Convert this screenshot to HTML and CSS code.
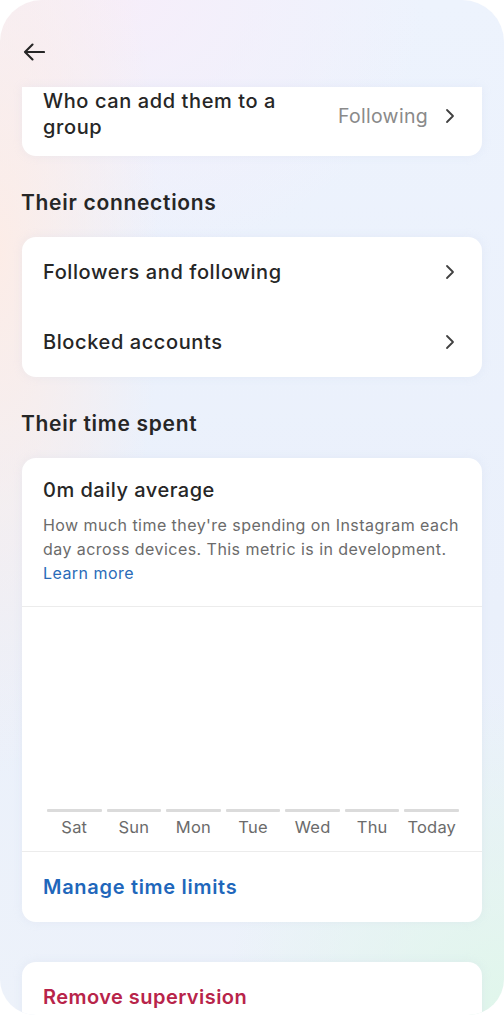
FILE: index.html
```html
<!DOCTYPE html>
<html>
<head>
<meta charset="utf-8">
<link rel="stylesheet" href="styles.css">
</head>
<body>
<div class="screen">
  <div class="header">
    <svg class="back" width="22" height="18" viewBox="0 0 22 18"><path d="M21 9H2.5M9.5 1.5L2 9l7.5 7.5" fill="none" stroke="#262626" stroke-width="2.1" stroke-linecap="round" stroke-linejoin="round"/></svg>
  </div>
  <div class="content">
    <div class="card card-cut">
      <div class="row row-tall">
        <span class="label">Who can add them to a<br>group</span>
        <span class="value">Following</span>
        <svg class="chev" width="10" height="16" viewBox="0 0 10 16"><path d="M2 2l6 6-6 6" fill="none" stroke="#404040" stroke-width="1.8" stroke-linecap="round" stroke-linejoin="round"/></svg>
      </div>
    </div>

    <h2 class="section-title">Their connections</h2>
    <div class="card">
      <div class="row">
        <span class="label">Followers and following</span>
        <svg class="chev" width="10" height="16" viewBox="0 0 10 16"><path d="M2 2l6 6-6 6" fill="none" stroke="#404040" stroke-width="1.8" stroke-linecap="round" stroke-linejoin="round"/></svg>
      </div>
      <div class="row">
        <span class="label">Blocked accounts</span>
        <svg class="chev" width="10" height="16" viewBox="0 0 10 16"><path d="M2 2l6 6-6 6" fill="none" stroke="#404040" stroke-width="1.8" stroke-linecap="round" stroke-linejoin="round"/></svg>
      </div>
    </div>

    <h2 class="section-title">Their time spent</h2>
    <div class="card">
      <div class="time-top">
        <div class="avg">0m daily average</div>
        <p class="desc">How much time they're spending on Instagram each day across devices. This metric is in development. <br><span class="link">Learn more</span></p>
      </div>
      <div class="chart">
        <div class="day"><div class="bar"></div><span>Sat</span></div>
        <div class="day"><div class="bar"></div><span>Sun</span></div>
        <div class="day"><div class="bar"></div><span>Mon</span></div>
        <div class="day"><div class="bar"></div><span>Tue</span></div>
        <div class="day"><div class="bar"></div><span>Wed</span></div>
        <div class="day"><div class="bar"></div><span>Thu</span></div>
        <div class="day"><div class="bar"></div><span>Today</span></div>
      </div>
      <div class="action action-blue">Manage time limits</div>
    </div>

    <div class="card card-last">
      <div class="action action-red">Remove supervision</div>
    </div>
  </div>
</div>
</body>
</html>
```

FILE: styles.css
```css
* { box-sizing: border-box; }
html, body {
  margin: 0;
  padding: 0;
  background: #ffffff;
}
body {
  font-family: Inter, "Noto Sans", sans-serif;
  color: #262626;
}
.screen {
  width: 504px;
  height: 1015px;
  border-radius: 42px 42px 36px 36px;
  overflow: hidden;
  background:
    radial-gradient(ellipse 160px 520px at 0% 25%, rgba(253, 236, 230, 0.95), rgba(253, 236, 230, 0) 100%),
    radial-gradient(ellipse 280px 320px at 100% 100%, rgba(224, 246, 235, 1), rgba(224, 246, 235, 0) 100%),
    radial-gradient(ellipse 300px 260px at 25% 0%, rgba(246, 238, 250, 1), rgba(246, 238, 250, 0) 100%),
    linear-gradient(180deg, #edf3fd 0%, #eaf0fb 60%, #edf2fa 100%);
}
.header {
  height: 87px;
  display: flex;
  align-items: center;
  padding: 0 0 0 23px;
}
.back {
  display: block;
  margin-top: 17px;
}
.content {
  padding: 0 22px;
}
.card {
  background: #ffffff;
  border-radius: 14px;
  box-shadow: 0 0 10px rgba(190, 200, 220, 0.18);
  overflow: hidden;
}
.card-cut {
  border-radius: 0 0 14px 14px;
}
.row {
  height: 70px;
  display: flex;
  align-items: center;
  padding: 0 27px 0 21px;
}
.row-tall {
  height: 69px;
  align-items: flex-start;
  padding-top: 1px;
}
.row-tall .value, .row-tall .chev {
  align-self: center;
  margin-top: -12px;
}
.label {
  flex: 1;
  font-size: 20px;
  font-weight: 500;
  line-height: 26px;
  letter-spacing: 0.6px;
  color: #262626;
}
.value {
  font-size: 19.5px;
  letter-spacing: 0.3px;
  color: #8a8a8a;
  margin-right: 17px;
}
.chev { display: block; flex: none; }
.section-title {
  margin: 34px 0 21px -1px;
  font-size: 21px;
  line-height: 26px;
  font-weight: 600;
  letter-spacing: 0.7px;
  color: #262626;
}
.time-top {
  padding: 19px 10px 21px 21px;
  border-bottom: 1px solid #ececec;
}
.avg {
  font-size: 20px;
  font-weight: 500;
  line-height: 26px;
  letter-spacing: 0.5px;
}
.desc {
  margin: 10px 0 0 0;
  font-size: 16px;
  line-height: 24px;
  letter-spacing: 0.45px;
  color: #6b6b6b;
}
.link {
  color: #2a6bb8;
}
.chart {
  height: 245px;
  display: flex;
  align-items: flex-end;
  gap: 5px;
  padding: 0 23px 13px 25px;
  border-bottom: 1px solid #ececec;
}
.day {
  flex: 1;
  display: flex;
  flex-direction: column;
  align-items: center;
}
.bar {
  width: 100%;
  height: 3px;
  background: #dbdbdb;
  border-radius: 1px;
}
.day span {
  margin-top: 4px;
  font-size: 16.5px;
  line-height: 22px;
  letter-spacing: 0.2px;
  color: #6b6b6b;
}
.action {
  height: 70px;
  display: flex;
  align-items: center;
  padding: 0 21px;
  font-size: 20px;
  font-weight: 600;
  letter-spacing: 0.7px;
}
.action-blue { color: #1f67bb; }
.action-red { color: #b8244a; letter-spacing: 0.45px; }
.card-last {
  margin-top: 40px;
}
```
